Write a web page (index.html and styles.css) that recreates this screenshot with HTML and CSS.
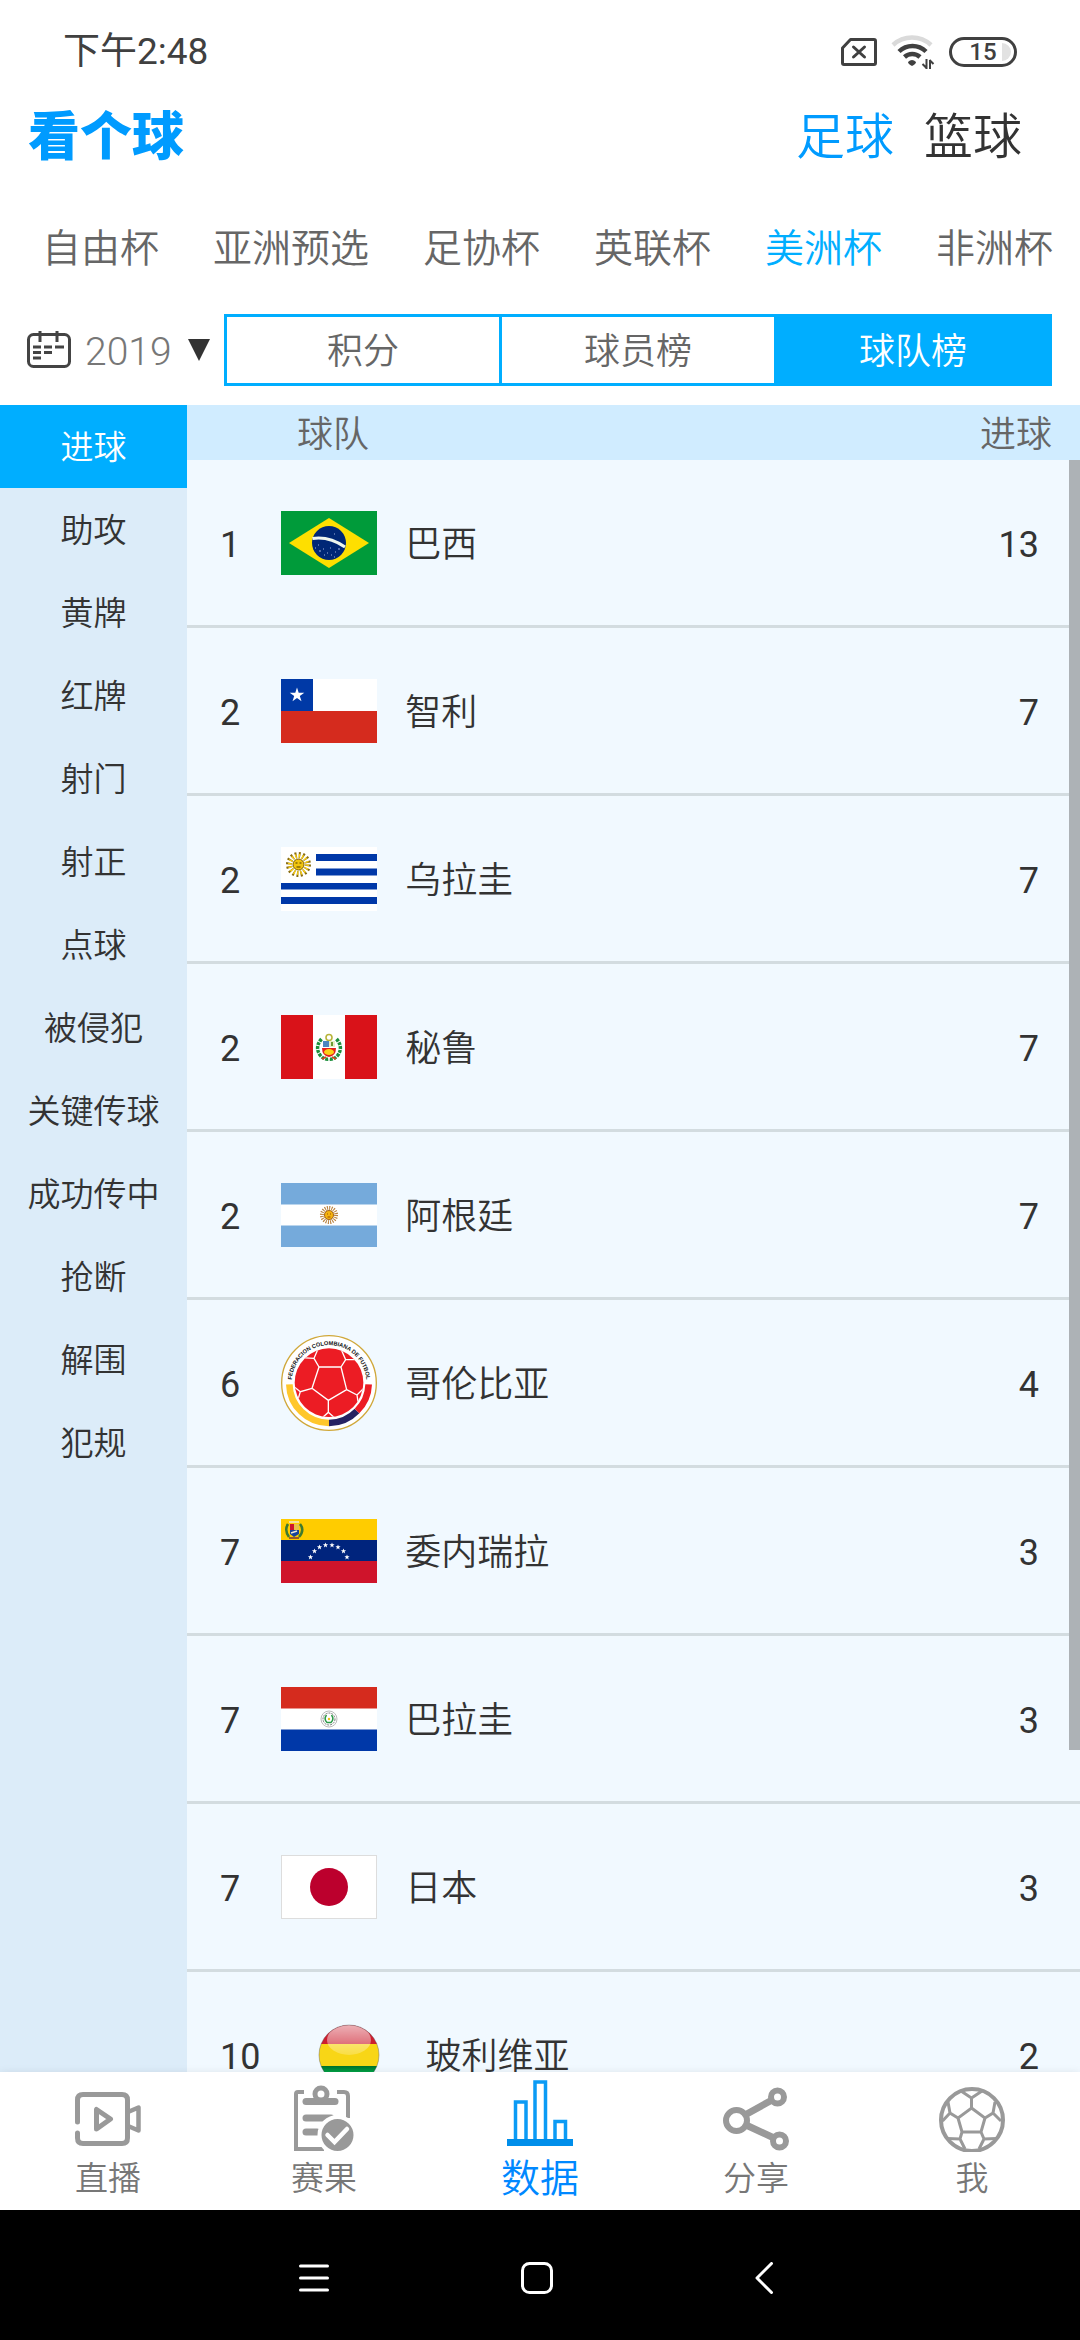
FILE: index.html
```html
<!DOCTYPE html>
<html lang="zh-CN">
<head>
<meta charset="utf-8">
<meta name="viewport" content="width=device-width, initial-scale=1">
<title>看个球</title>
<link rel="stylesheet" href="styles.css">
</head>
<body>
<div class="status">
  <time class="status-time">下午2:48</time>
  <div class="status-icons">
    <svg width="36" height="28" viewBox="0 0 36 28" fill="none" stroke="#404040" stroke-width="3" stroke-linejoin="round"><path d="M9.500 1.500H33Q34.500 1.500 34.500 3V25Q34.500 26.500 33 26.500H3Q1.500 26.500 1.500 25V10Z"/><path d="M12.500 9L23.500 19M23.500 9L12.500 19" stroke-linecap="round"/></svg>
    <svg width="44" height="34" viewBox="0 0 44 34" fill="none"><path d="M2 10A28 28 0 0 1 40 10" stroke="#dadada" stroke-width="4.500"/><path d="M8 16.500A19.500 19.500 0 0 1 35 16.500M13.500 22A11.500 11.500 0 0 1 29 22" stroke="#404040" stroke-width="4.500"/><path d="M17 27Q21 23 25 27Q25 29 21 31Q17 29 17 27Z" fill="#404040"/><path d="M35.500 24V34M35.500 33L31.500 29M39 34V25M38.500 25L42.500 29" stroke="#404040" stroke-width="2"/></svg>
    <span class="battery">15<i class="battery-level"></i></span>
  </div>
</div>

<header class="top">
  <h1 class="logo">看个球</h1>
  <nav class="sports">
    <a class="is-current" href="#football">足球</a>
    <a href="#basketball">篮球</a>
  </nav>
</header>

<nav class="cups">
  <a href="#c1">自由杯</a>
  <a href="#c2">亚洲预选</a>
  <a href="#c3">足协杯</a>
  <a href="#c4">英联杯</a>
  <a class="is-current" href="#c5">美洲杯</a>
  <a href="#c6">非洲杯</a>
</nav>

<div class="filters">
  <label class="season">
    <svg width="44" height="38" viewBox="0 0 44 38" fill="none" stroke="#444" stroke-width="3"><rect x="1.500" y="3.500" width="41" height="32" rx="5"/><path d="M13 0V11M30 0V11M6 16H14M17 16H25M28 16H37M6 21.500H14M17 21.500H25M6 27H14"/></svg>
    <select class="season-select" aria-label="赛季"><option>2019</option></select>
    <svg width="22" height="22" viewBox="0 0 22 22"><path d="M0 0H22L11 22Z" fill="#333"/></svg>
  </label>
  <div class="segments">
    <button type="button">积分</button>
    <button type="button">球员榜</button>
    <button type="button" class="is-current">球队榜</button>
  </div>
</div>

<main class="main">
  <nav class="stats">
    <button type="button" class="is-current">进球</button>
    <button type="button">助攻</button>
    <button type="button">黄牌</button>
    <button type="button">红牌</button>
    <button type="button">射门</button>
    <button type="button">射正</button>
    <button type="button">点球</button>
    <button type="button">被侵犯</button>
    <button type="button">关键传球</button>
    <button type="button">成功传中</button>
    <button type="button">抢断</button>
    <button type="button">解围</button>
    <button type="button">犯规</button>
  </nav>

  <section class="board">
    <table class="ranking">
      <thead><tr><th scope="col" class="head-team">球队</th><th scope="col" class="head-score">进球</th></tr></thead>
      <tbody>
        <tr><td><div class="team"><span>1</span>
          <svg class="flag" viewBox="0 0 96 64"><rect width="96" height="64" fill="#009b3a"/><path d="M8 32L48 7L88 32L48 57Z" fill="#fedf00"/><circle cx="48" cy="32" r="17" fill="#002776"/><path d="M31.500 27.500Q48 25 64 36" fill="none" stroke="#eef6ee" stroke-width="3"/><path d="M34 37h1M38 40h2M37 34h1M42 38h1M46 42h1M50 44h1M54 41h1M57 38h2M49 37h1M53 46h1M43 44h1M53 23h1" stroke="#9fb2dc" stroke-width="1.200"/></svg>
          <span>巴西</span></div></td><td class="score">13</td></tr>
        <tr><td><div class="team"><span>2</span>
          <svg class="flag" viewBox="0 0 96 64"><rect width="96" height="64" fill="#fff"/><rect y="32" width="96" height="32" fill="#d52b1e"/><rect width="32" height="32" fill="#0039a6"/><path d="M16 8.500L17.700 13.700H23.300L18.800 17L20.500 22.300L16 19L11.500 22.300L13.200 17L8.700 13.700H14.300Z" fill="#fff"/></svg>
          <span>智利</span></div></td><td class="score">7</td></tr>
        <tr><td><div class="team"><span>2</span>
          <svg class="flag" viewBox="0 0 96 64"><rect width="96" height="64" fill="#fff"/><path d="M35 7H96V14H35ZM35 21.500H96V28.500H35ZM0 36H96V42.500H0ZM0 50H96V57H0Z" fill="#0038a8"/><circle cx="17.500" cy="17.500" r="9.500" fill="none" stroke="#8a6d10" stroke-width="6" stroke-dasharray="1.700 2.030"/><circle cx="17.500" cy="17.500" r="8.500" fill="none" stroke="#fcd116" stroke-width="4" stroke-dasharray="1.300 2.030"/><circle cx="17.500" cy="17.500" r="5.500" fill="#f0c40f" stroke="#7b5c00"/><path d="M14.500 16h2M18.500 16h2M15.500 20h4" stroke="#4d3a00"/></svg>
          <span>乌拉圭</span></div></td><td class="score">7</td></tr>
        <tr><td><div class="team"><span>2</span>
          <svg class="flag" viewBox="0 0 96 64"><rect width="96" height="64" fill="#fff"/><path d="M0 0H32V64H0ZM64 0H96V64H64Z" fill="#d91219"/><circle cx="48" cy="22.500" r="3" fill="none" stroke="#b8b43a" stroke-width="1.600"/><path d="M40.500 24Q33.500 32 39 40Q43 45 48 44M55.500 24Q62.500 32 57 40Q53 45 48 44" fill="none" stroke="#1d8f3c" stroke-width="3.500" stroke-dasharray="3 1"/><path d="M42 26H48V32H42Z" fill="#4a86c0"/><path d="M48 26H54V32H48Z" fill="#e8edc6"/><path d="M51 27V31" stroke="#6d9b34" stroke-width="2"/><path d="M41 33H55Q55 41 48 42Q41 41 41 33Z" fill="#e3201b"/><ellipse cx="48" cy="37" rx="5" ry="3" fill="#fbd116"/><path d="M41 44L45 42M51 42L55 44" stroke="#d9401b" stroke-width="1.500"/></svg>
          <span>秘鲁</span></div></td><td class="score">7</td></tr>
        <tr><td><div class="team"><span>2</span>
          <svg class="flag" viewBox="0 0 96 64"><rect width="96" height="64" fill="#75aadb"/><rect y="21.500" width="96" height="21" fill="#fff"/><circle cx="48" cy="32" r="6.800" fill="none" stroke="#b9803c" stroke-width="4.500" stroke-dasharray="1 1.136"/><circle cx="48" cy="32" r="4.500" fill="#f6b40e" stroke="#a8671a"/><path d="M46 31h1M49 31h1M46.500 34h3" stroke="#85340a" stroke-width=".8"/></svg>
          <span>阿根廷</span></div></td><td class="score">7</td></tr>
        <tr><td><div class="team"><span>6</span>
          <svg class="crest" viewBox="0 0 288 288"><defs><path id="crest-arc" d="M32 148V142A112 112 0 0 1 256 142V148"/><clipPath id="crest-ball"><circle cx="144" cy="143" r="103"/></clipPath></defs><circle cx="144" cy="144" r="142" fill="#fff" stroke="#d0a83a" stroke-width="4"/><circle cx="144" cy="143" r="103" fill="#ec1c24"/><g clip-path="url(#crest-ball)" fill="none" stroke="#fff" stroke-width="4"><path d="M114 96H180L197 164L142 196L93 160ZM114 96L99 70L111 42M99 70L60 68M180 96L194 74L180 42M194 74L230 74M197 164L228 180L250 158M228 180L232 206M142 196V232L124 248M142 232L160 248M93 160L58 170L40 156M58 170L52 190"/></g><g fill="none" stroke-width="20"><path d="M25 148A119 119 0 0 0 144 264" stroke="#ffc72c"/><path d="M144 264A119 119 0 0 0 228 228" stroke="#262262"/><path d="M228 228A119 119 0 0 0 263 148" stroke="#ec1c24"/></g><text class="crest-text"><textPath href="#crest-arc" startOffset="50%" text-anchor="middle">FEDERACION COLOMBIANA DE FUTBOL</textPath></text></svg>
          <span>哥伦比亚</span></div></td><td class="score">4</td></tr>
        <tr><td><div class="team"><span>7</span>
          <svg class="flag" viewBox="0 0 96 64"><rect width="96" height="64" fill="#cf142b"/><rect width="96" height="42" fill="#00247d"/><rect width="96" height="21" fill="#fc0"/><g fill="#fff"><path id="star" d="M29.500 35.500l.7 1.800h1.900l-1.500 1.200.5 1.900-1.600-1.100-1.600 1.100.5-1.900-1.500-1.200h1.900z"/><use href="#star" x="4" y="-6"/><use href="#star" x="9" y="-10"/><use href="#star" x="15" y="-12"/><use href="#star" x="21.500" y="-12"/><use href="#star" x="27.500" y="-10"/><use href="#star" x="33" y="-6"/><use href="#star" x="36.500"/></g><path d="M7 5Q3 11 8 18M19 5Q24 11 18 18" fill="none" stroke="#3f7a2f" stroke-width="2.500"/><path d="M9 5H13V11H9Z" fill="#cf142b"/><path d="M13 5H18V11H13Z" fill="#e8c24a"/><path d="M9 11H18V15L13 18L9 15Z" fill="#17439b"/><path d="M8 3H18M10 14L16 12" stroke="#f1e9d2" stroke-width="1.500"/><path d="M8 19H18" stroke="#9a5b27" stroke-width="2"/></svg>
          <span>委内瑞拉</span></div></td><td class="score">3</td></tr>
        <tr><td><div class="team"><span>7</span>
          <svg class="flag" viewBox="0 0 96 64"><rect width="96" height="64" fill="#fff"/><rect width="96" height="21.500" fill="#d52b1e"/><rect y="42.500" width="96" height="21.500" fill="#0038a8"/><g fill="none"><circle cx="48" cy="32" r="8" stroke="#bbb"/><circle cx="48" cy="32" r="6" stroke="#777" stroke-dasharray="2 1"/><path d="M45.500 28Q42.500 32 46 35.500H50Q53.500 32 50.500 28" stroke="#2c9a48" stroke-width="1.500"/></g><circle cx="48" cy="32" r="1.200" fill="#e9c21c"/></svg>
          <span>巴拉圭</span></div></td><td class="score">3</td></tr>
        <tr><td><div class="team"><span>7</span>
          <svg class="flag" viewBox="0 0 96 64"><rect x=".5" y=".5" width="95" height="63" fill="#fff" stroke="#ddd"/><circle cx="48" cy="32" r="19" fill="#bc002d"/></svg>
          <span>日本</span></div></td><td class="score">3</td></tr>
        <tr><td><div class="team"><span>10</span>
          <svg class="flag" viewBox="0 0 96 64"><defs><clipPath id="bolivia"><circle cx="48" cy="32" r="30"/></clipPath><linearGradient id="gloss" x2="0" y2="1"><stop offset="0" stop-color="#fff" stop-opacity=".65"/><stop offset="1" stop-color="#fff" stop-opacity=".2"/></linearGradient><linearGradient id="green" x2="0" y2="1"><stop offset="0" stop-color="#00702a"/><stop offset=".5" stop-color="#00c95b"/></linearGradient></defs><g clip-path="url(#bolivia)"><rect width="96" height="21" fill="#cc1f2f"/><rect y="21" width="96" height="22" fill="#f8d616"/><rect y="43" width="96" height="21" fill="url(#green)"/><ellipse cx="48" cy="17" rx="22" ry="15" fill="url(#gloss)"/></g><circle cx="48" cy="32" r="30" fill="none" stroke="#555" stroke-opacity=".4"/></svg>
          <span>玻利维亚</span></div></td><td class="score">2</td></tr>
      </tbody>
    </table>
    <div class="scroll-thumb"></div>
  </section>
</main>

<nav class="tabbar">
  <a href="#live"><svg width="66" height="72" viewBox="0 0 66 72" fill="none" stroke="#999" stroke-width="5"><path d="M2.500 42V20Q2.500 14.500 8 14.500H47Q52.500 14.500 52.500 20V58Q52.500 63.500 47 63.500H8Q2.500 63.500 2.500 58V53" stroke-linecap="round"/><path d="M21.500 29.500V49L35.500 39Z" stroke-linejoin="round"/><path d="M53 32L63.500 27.500V50.500L53 46" stroke-width="4.500" stroke-linejoin="round"/></svg>直播</a>
  <a href="#results"><svg width="66" height="72" viewBox="0 0 66 72" fill="none" stroke="#999"><path d="M13 12H7Q5 12 5 14V69H33M46 12H53Q57 12 57 16V38" stroke-width="4"/><path d="M15 21.500H44" stroke-width="7" stroke-linecap="round"/><circle cx="30" cy="14" r="6" stroke-width="5"/><path d="M15 38H40M15 52H26" stroke-width="7" stroke-linecap="round"/><circle cx="46.500" cy="55" r="18" fill="#999" stroke="#fff" stroke-width="4"/><path d="M36.500 55L43.500 62L56 49" stroke="#fff" stroke-width="4.500" stroke-linecap="round"/></svg>赛果</a>
  <a class="is-current" href="#data"><svg width="66" height="72" viewBox="0 0 66 72" fill="none" stroke="#0b9bf5" stroke-width="3.500"><path d="M8.500 60V22H19V60M28 60V2H38.500V60M48 60V41.500H58.500V60"/><path d="M0 62.500H66" stroke="#008eea" stroke-width="7"/></svg>数据</a>
  <a href="#share"><svg width="66" height="72" viewBox="0 0 66 72" fill="none" stroke="#999" stroke-width="6"><path d="M22 35L49 20M23 45L51 58" stroke-width="7"/><circle cx="13.500" cy="40.500" r="10.500"/><circle cx="54.500" cy="17" r="6.500"/><circle cx="56.500" cy="61" r="6.500"/></svg>分享</a>
  <a href="#me"><svg width="66" height="72" viewBox="0 0 66 72" fill="none" stroke="#999" stroke-width="3"><circle cx="33" cy="40" r="31" stroke-width="4"/><path d="M32.500 28L46 38L42 52H23L19 38ZM32.500 28V18L22 11M32.500 18L43 11M19 38L11 33L9 22M11 33L3.500 41M46 38L54 33L56 22M54 33L62 41M23 52L21 59L8 58.500M21 59L26 69M42 52L45 59L58 58.500M45 59L40 69"/></svg>我</a>
</nav>

<div class="system">
  <button type="button" aria-label="菜单"><svg width="32" height="32" viewBox="0 0 32 32" fill="none" stroke="#fff" stroke-width="3" stroke-linecap="round"><path d="M2.500 4H29.500M2.500 16H29.500M2.500 28H29.500"/></svg></button>
  <button type="button" aria-label="主页"><svg width="32" height="32" viewBox="0 0 32 32" fill="none" stroke="#fff" stroke-width="3"><rect x="1.500" y="1.500" width="29" height="29" rx="7"/></svg></button>
  <button type="button" aria-label="返回"><svg width="32" height="32" viewBox="0 0 32 32" fill="none" stroke="#fff" stroke-width="3" stroke-linecap="round" stroke-linejoin="round"><path d="M27.500 1.500L13 16L27.500 30.500"/></svg></button>
</div>
</body>
</html>
```
FILE: styles.css
```css
* { box-sizing: border-box; }

body {
  margin: 0;
  min-width: 0;
  height: 100vh;
  display: flex;
  flex-direction: column;
  overflow: hidden;
  background: #fff;
  color: #333;
  font-family: Roboto, "Noto Sans CJK SC", sans-serif;
  font-size: 36px;
  font-weight: 350;
  line-height: 44px;
}

svg { display: block; flex: none; }
a { color: inherit; text-decoration: none; }

button {
  margin: 0;
  padding: 0;
  border: 0;
  background: none;
  color: inherit;
  font: inherit;
}

/* Status bar */
.status {
  flex: none;
  height: 104px;
  padding: 0 63px;
  display: flex;
  align-items: center;
  justify-content: space-between;
  color: #404040;
  font-size: 37px;
  font-weight: 400;
}

.status-icons {
  display: flex;
  align-items: center;
  gap: 14px;
}

.battery {
  position: relative;
  width: 68px;
  height: 30px;
  border: 3px solid #404040;
  border-radius: 15px;
  font-size: 24px;
  font-weight: 500;
  line-height: 24px;
  text-align: center;
}

.battery-level {
  position: absolute;
  top: 3px;
  right: 3px;
  width: 9px;
  height: 18px;
  border-radius: 0 9px 9px 0;
  background: #e2e2e2;
}

/* Header */
.top {
  flex: none;
  height: 68px;
  padding: 0 58px 0 28px;
  display: flex;
  align-items: center;
  justify-content: space-between;
}

.logo {
  margin: 0;
  color: #009bff;
  font-size: 52px;
  font-weight: 900;
  line-height: 68px;
}

.sports {
  display: flex;
  gap: 30px;
  font-size: 49px;
  line-height: 68px;
}

.sports .is-current { color: #009bff; }

/* Competitions */
.cups {
  flex: none;
  padding: 50px 0 38px 42px;
  display: flex;
  gap: 54px;
  overflow: hidden;
  color: #666;
  font-size: 39px;
  line-height: 54px;
  white-space: nowrap;
}

.cups .is-current { color: #00aeff; }

/* Season and table switch */
.filters {
  flex: none;
  margin-bottom: 19px;
  padding: 0 28px 0 27px;
  display: flex;
  align-items: center;
  gap: 14px;
}

.season {
  display: flex;
  align-items: center;
  gap: 14px;
}

.season-select {
  width: 89px;
  margin: 0;
  padding: 3px 0 0;
  border: 0;
  appearance: none;
  background: none;
  color: #777;
  font: inherit;
  font-size: 39px;
}

.segments {
  flex: 1;
  height: 72px;
  display: flex;
  border: 3px solid #00aeff;
  color: #666;
}

.segments button { flex: 1; padding-top: 3px; }
.segments button + button { border-left: 3px solid #00aeff; }
.segments .is-current { background: #00aeff; color: #fff; }

/* Statistics sidebar and ranking */
.main {
  flex: 1;
  min-height: 0;
  display: flex;
}

.stats {
  width: 187px;
  flex: none;
  overflow: hidden;
  display: flex;
  flex-direction: column;
  background: #dcecf9;
  font-size: 33px;
}

.stats button { flex: none; height: 83px; padding-top: 3px; }
.stats .is-current { background: #00aeff; color: #fff; }

.board {
  position: relative;
  flex: 1;
  min-width: 0;
  overflow: hidden;
  background: #f1f9ff;
}

.ranking {
  width: 100%;
  border-collapse: separate;
  border-spacing: 0;
}

.ranking th {
  height: 55px;
  padding: 4px 0 0;
  background: #d0ecff;
  color: #666;
  font-weight: 350;
}

.ranking .head-team { padding-left: 110px; text-align: left; }
.ranking .head-score { padding-right: 28px; text-align: right; }

.ranking td {
  height: 168px;
  padding: 0;
  border-bottom: 3px solid #d3dce0;
}

.ranking .score {
  padding: 4px 41px 0 0;
  text-align: right;
  font-weight: 400;
}

.team {
  padding-left: 33px;
  display: flex;
  align-items: center;
}

.team span { padding-top: 4px; }
.team span:first-child { font-weight: 400; }

.flag {
  width: 96px;
  height: 64px;
  margin: 0 28px 0 41px;
}

.crest {
  width: 96px;
  height: 96px;
  margin: 0 28px 0 41px;
}

.crest-text {
  font-family: "Liberation Sans Narrow", "Liberation Sans", sans-serif;
  font-size: 17px;
  font-weight: 700;
  fill: #111;
}

.scroll-thumb {
  position: absolute;
  top: 55px;
  right: 0;
  width: 11px;
  height: calc((100% - 55px) * 0.8);
  background: #adb2b6;
}

/* Bottom tabs */
.tabbar {
  position: relative;
  flex: none;
  height: 138px;
  padding-top: 8px;
  display: flex;
  background: #fff;
  box-shadow: 0 0 8px rgba(0, 0, 0, 0.08);
  color: #777;
  font-size: 33px;
}

.tabbar a {
  flex: 1;
  display: flex;
  flex-direction: column;
  align-items: center;
  gap: 5px;
}

.tabbar .is-current { color: #0088ff; font-size: 39px; }

/* System navigation */
.system {
  flex: none;
  height: 130px;
  padding: 6px 6px 0 0;
  display: flex;
  align-items: center;
  justify-content: center;
  gap: 191px;
  background: #000;
}
```
